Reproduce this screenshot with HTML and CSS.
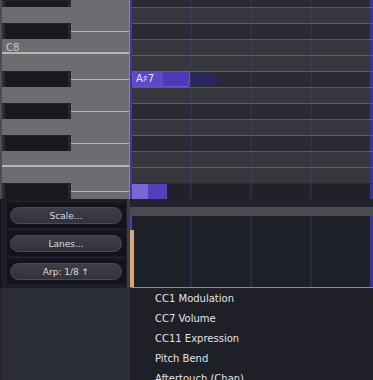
FILE: index.html
```html
<!DOCTYPE html>
<html lang="en">
<head>
    <meta charset="UTF-8">
    <meta name="viewport" content="width=device-width, initial-scale=1.0">
    <title>Piano Roll</title>
    <link rel="stylesheet" href="styles.css">
</head>
<body>
    <div class="app">
        <div class="piano">
            <div class="key sharp cut"><span class="black"></span></div>
            <div class="key"></div>
            <div class="key sharp"><span class="black"></span><span class="seam"></span></div>
            <div class="key c-key"><span class="name">C8</span><span class="split"></span></div>
            <div class="key"></div>
            <div class="key sharp"><span class="black"></span><span class="seam"></span></div>
            <div class="key"></div>
            <div class="key sharp"><span class="black"></span><span class="seam"></span></div>
            <div class="key"></div>
            <div class="key sharp"><span class="black"></span><span class="seam"></span></div>
            <div class="key f-key"><span class="split"></span></div>
            <div class="key"></div>
            <div class="key sharp"><span class="black"></span><span class="seam"></span></div>
        </div>

        <div class="roll">
            <div class="row dark first"></div>
            <div class="row"></div>
            <div class="row dark"></div>
            <div class="row"></div>
            <div class="row"></div>
            <div class="row dark">
                <div class="note"><span class="note-name">A♯7</span></div>
                <div class="ghost"></div>
            </div>
            <div class="row"></div>
            <div class="row dark"></div>
            <div class="row"></div>
            <div class="row dark"></div>
            <div class="row"></div>
            <div class="row"></div>
            <div class="row low">
                <div class="note-small"><span class="head"></span></div>
            </div>
        </div>

        <div class="tools">
            <div class="slot"><button class="pill">Scale...</button></div>
            <div class="slot"><button class="pill">Lanes...</button></div>
            <div class="slot"><button class="pill">Arp: 1/8 ↑</button></div>
        </div>

        <div class="lane">
            <div class="lane-gap"></div>
            <div class="lane-bar"></div>
            <div class="lane-body"><span class="lane-mark"></span></div>
        </div>

        <div class="side"></div>

        <ul class="menu">
            <li>CC1 Modulation</li>
            <li>CC7 Volume</li>
            <li>CC11 Expression</li>
            <li>Pitch Bend</li>
            <li>Aftertouch (Chan)</li>
        </ul>
    </div>
</body>
</html>
```

FILE: styles.css
```css
body{
    margin: 0;
    background-color: #1f2027;
    font-family: 'DejaVu Sans', Verdana, sans-serif;
    overflow: hidden;
}

.app{
    display: grid;
    grid-template-columns: 130px 243px;
    grid-template-rows: 199px 89px 92px;
    width: 373px;
    height: 380px;
}

/* piano keys */

.piano{
    display: flex;
    flex-direction: column;
    background-color: #6d6d71;
    border-left: 2px solid #4d4d51;
    border-right: 1px solid #85858a;
}

.key{
    height: 16px;
    display: flex;
    flex-shrink: 0;
}

.key.sharp{
    align-items: center;
}

.key.cut{
    height: 7px;
}

.black{
    align-self: stretch;
    width: 69px;
    background: linear-gradient(to right, #2c2d33 0 3px, #18191d 3px 66px, #26272c 66px);
    border-top: 1px solid #222328;
    box-sizing: border-box;
}

.seam{
    flex: 1;
    height: 1px;
    background-color: #b6b6ba;
}

.c-key, .f-key{
    flex-direction: column;
    justify-content: flex-end;
}

.name{
    color: #c6c6ca;
    font-size: 10px;
    line-height: 11px;
    padding-left: 4px;
    margin-bottom: -1px;
}

.split{
    height: 2px;
    background-color: #b6b6ba;
    margin-bottom: 1px;
}

.f-key .split{
    margin-bottom: 0;
}

/* note grid */

.roll{
    display: flex;
    flex-direction: column;
    border-left: 2px solid #4536a6;
}

.row{
    height: 16px;
    flex-shrink: 0;
    display: flex;
    box-sizing: border-box;
    border-top: 1px solid #5b5c62;
    background-color: #36373c;
    background-image:
        linear-gradient(to right, transparent 238px, #3d358c 238px),
        repeating-linear-gradient(to right, transparent 0 58px, rgba(70, 60, 160, 0.25) 58px 60px);
}

.row.dark{
    background-color: #292a33;
}

.row.first{
    height: 7px;
    border-top: none;
}

.row.low{
    background-color: #212229;
    border-top-color: #2c2d34;
}

.note{
    width: 58px;
    display: flex;
    box-sizing: border-box;
    background-color: #4a3ab5;
    border: 1px solid #6556cf;
    border-radius: 2px;
    margin-top: -1px;
}

.note-name{
    width: 27px;
    padding-left: 3px;
    background-color: #5a4ac6;
    color: #e4e0ff;
    font-size: 10px;
    line-height: 14px;
}

.ghost{
    width: 27px;
    margin: 1px 0 1px 1px;
    background-color: #29255f;
}

.note-small{
    width: 35px;
    display: flex;
    background-color: #5140bd;
}

.head{
    width: 16px;
    background-color: #7868d5;
}

/* left tool buttons */

.tools{
    display: flex;
    flex-direction: column;
    gap: 3px;
    padding: 4px 1px 0 6px;
    background-color: #1d1c2b;
    border-left: 1px solid #111117;
    border-right: 3px solid #3a3b44;
}

.slot{
    height: 25px;
    box-sizing: border-box;
    padding: 4px 4px 4px 3px;
    background-color: #13131a;
}

.pill{
    display: block;
    width: 100%;
    height: 17px;
    padding: 0;
    border: 1px solid #4a4b55;
    border-radius: 9px;
    background: linear-gradient(#3d3e48, #31323b);
    color: #dcdce4;
    font-family: 'DejaVu Sans', Verdana, sans-serif;
    font-size: 9px;
}

/* automation lane */

.lane{
    display: flex;
    flex-direction: column;
}

.lane-gap{
    height: 8px;
    background-color: #23242b;
}

.lane-bar{
    height: 9px;
    background-color: #4a4b50;
}

.lane-body{
    flex: 1;
    display: flex;
    border-left: 2px solid #1f2129;
    border-bottom: 1px solid #8a8b90;
    background-color: #1f2129;
    background-image:
        linear-gradient(to right, transparent 238px, #3d358c 238px),
        repeating-linear-gradient(to right, transparent 0 58px, rgba(70, 60, 160, 0.25) 58px 60px);
}

.lane-mark{
    width: 4px;
    margin-left: -2px;
    background:
        linear-gradient(#4c3cb0, #4c3cb0) 0 0 / 2px 14px no-repeat,
        linear-gradient(#d9a878, #d9a878) 0 14px / 4px 100% no-repeat;
}

/* bottom */

.side{
    background-color: #2b2d39;
    border-left: 2px solid #2c2722;
}

.menu{
    list-style: none;
    margin: 0;
    padding: 1px 0 0 25px;
    background-color: #1f2027;
    overflow: hidden;
}

.menu li{
    height: 20px;
    line-height: 20px;
    color: #e2e2ea;
    font-size: 10px;
}
```
